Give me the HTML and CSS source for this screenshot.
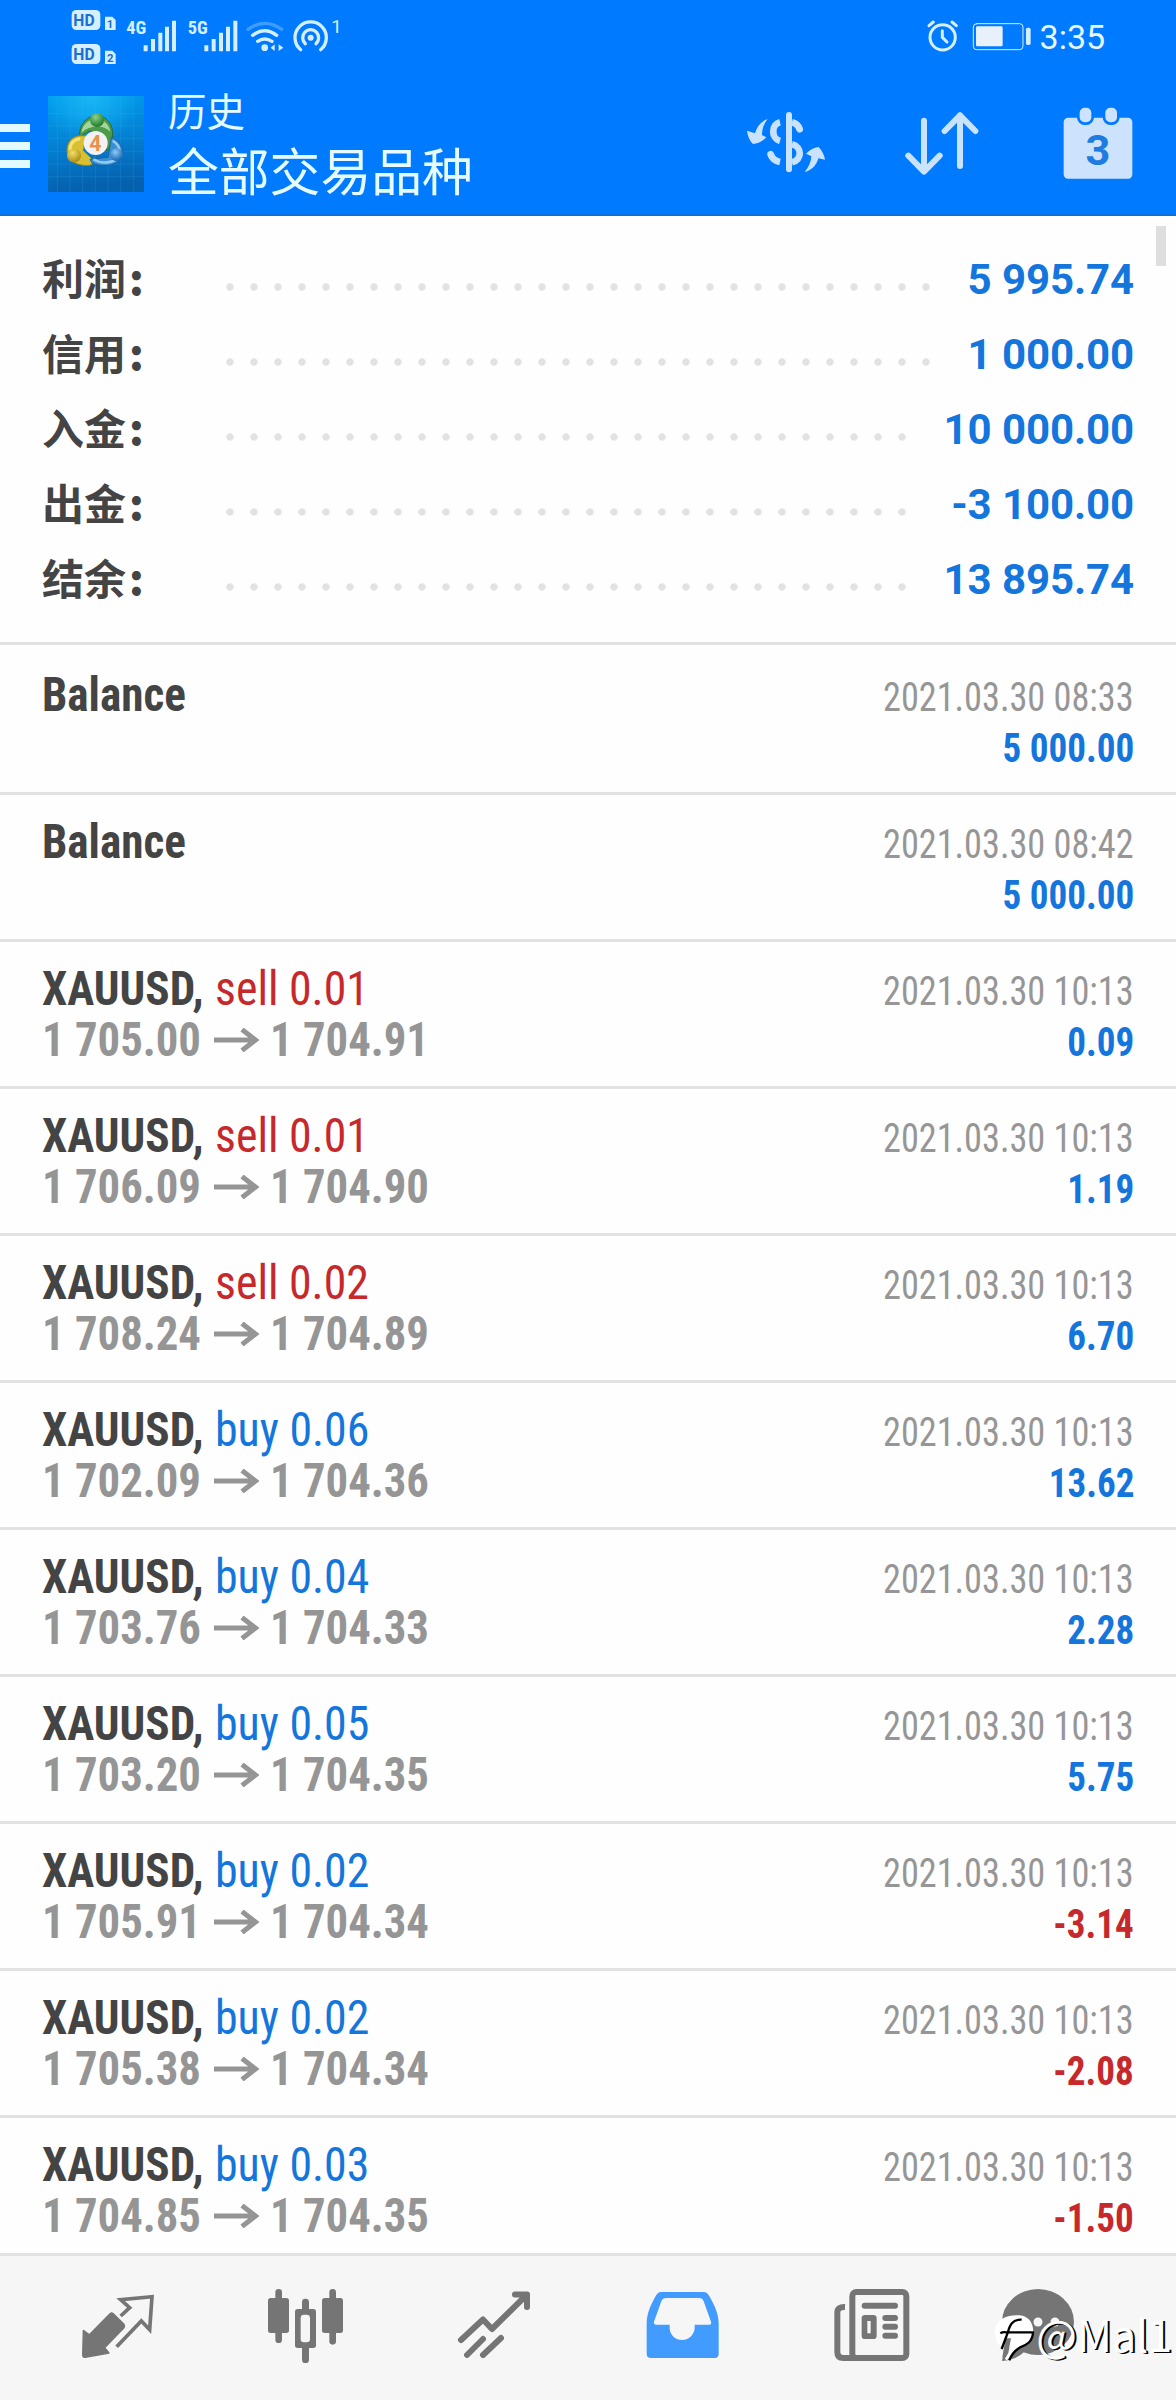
FILE: index.html
```html
<!DOCTYPE html>
<html lang="zh-CN">
<head>
<meta charset="utf-8">
<title>历史</title>
<link rel="stylesheet" href="styles.css">
</head>
<body>
<svg class="defs" width="0" height="0" aria-hidden="true">
  <symbol id="arrow" viewBox="0 0 45 24"><path d="M0 12H41M28 1.500L41.500 12L28 22.500" fill="none" stroke="#959595" stroke-width="5"/></symbol>
</svg>

<header class="header">
  <div class="status">
    <svg class="status-left" viewBox="180 0 870 216" aria-hidden="true">
      <g fill="#d5efff">
        <rect x="215" y="30" width="86" height="60" rx="14"/>
        <rect x="215" y="132" width="86" height="60" rx="14"/>
        <path d="M315 50H337L347 60V90H315ZM315 152H337L347 162V192H315Z"/>
        <path d="M431 136h12v18h-12zM453 117h12v37h-12zM475 98h12v56h-12zM495 80h12v74h-12zM516 62h12v92h-12z"/>
        <path d="M613 136h12v18h-12zM635 117h12v37h-12zM657 98h12v56h-12zM678 80h12v74h-12zM700 62h12v92h-12z"/>
        <circle cx="794" cy="143" r="10"/>
        <path d="M812 143L824 133V153ZM850 143L836 133V153Z"/>
        <circle cx="932" cy="113" r="9"/>
      </g>
      <g fill="none" stroke="#d5efff" stroke-width="10" stroke-linecap="round">
        <path d="M773 124Q794 110 816 124M758 106Q794 78 830 106"/>
        <path d="M744 88Q794 52 845 88" opacity=".3"/>
        <path d="M902 149A47 47 0 1 1 962 149M916 131A24 24 0 1 1 948 131"/>
      </g>
      <g class="st-text">
        <text class="hd" x="220" y="78">HD</text>
        <text class="hd" x="220" y="180">HD</text>
        <text class="sim" x="330" y="84" text-anchor="middle">1</text>
        <text class="sim" x="331" y="186" text-anchor="middle">2</text>
        <text class="net" x="379" y="103">4G</text>
        <text class="net" x="563" y="103">5G</text>
        <text class="one" x="994" y="98">1</text>
      </g>
    </svg>
    <svg class="status-right" viewBox="670 0 340 216" aria-hidden="true">
      <g fill="none" stroke="#d5efff" stroke-linecap="round">
        <circle cx="729" cy="112" r="38" stroke-width="9"/>
        <path d="M728 92V112L742 126" stroke-width="9"/>
        <path d="M688 77L701 66M770 77L757 66" stroke-width="9"/>
        <rect x="821" y="71" width="149" height="78" rx="10" stroke-width="3"/>
      </g>
      <rect x="829" y="79" width="80" height="60" rx="4" fill="#e8f1fb"/>
      <rect x="979" y="83" width="14" height="52" rx="5" fill="#d5efff"/>
    </svg>
    <span class="clock">3:35</span>
  </div>
  <div class="toolbar">
    <div class="burger"><i></i><i></i><i></i></div>
    <svg class="logo" viewBox="24 18 288 288" aria-hidden="true">
      <defs>
        <linearGradient id="bg" x1="0" y1="0" x2="0.15" y2="1"><stop offset="0" stop-color="#009fee"/><stop offset=".5" stop-color="#0482d4"/><stop offset="1" stop-color="#0560ae"/></linearGradient>
        <radialGradient id="glow" cx=".45" cy="0" r=".5"><stop offset="0" stop-color="#19b6f5"/><stop offset="1" stop-color="#19b6f5" stop-opacity="0"/></radialGradient>
        <radialGradient id="gg" cx=".4" cy=".3" r=".7"><stop offset="0" stop-color="#8ed18a"/><stop offset="1" stop-color="#1d7a2c"/></radialGradient>
        <radialGradient id="gy" cx=".4" cy=".3" r=".7"><stop offset="0" stop-color="#f3e067"/><stop offset="1" stop-color="#a98a13"/></radialGradient>
        <radialGradient id="gb" cx=".4" cy=".3" r=".7"><stop offset="0" stop-color="#8ccbf5"/><stop offset="1" stop-color="#1767b4"/></radialGradient>
      </defs>
      <rect x="24" y="18" width="288" height="288" fill="url(#bg)"/>
      <rect x="24" y="18" width="288" height="288" fill="url(#glow)"/>
      <path d="M52 18V306M90 18V306M128 18V306M166 18V306M204 18V306M242 18V306M280 18V306M24 70H312M24 108H312M24 146H312M24 184H312M24 222H312M24 260H312" stroke="#4fc0f5" stroke-width="1.500" opacity=".3"/>
      <path d="M119 140C116 103 140 78 170 78C201 78 222 104 217 142C214 162 209 175 200 182L190 140L150 122Z" fill="#4c9a4a" stroke="#2c6b34" stroke-width="3"/>
      <path d="M124 128C128 101 148 88 168 88C190 88 207 101 211 125C190 104 150 104 124 128Z" fill="#a5d59b"/>
      <path d="M138 138C105 132 80 150 81 182C82 210 110 230 150 226L166 216L130 182Z" fill="#d9c033" stroke="#8b8425" stroke-width="3"/>
      <path d="M214 142C239 151 252 174 247 197C240 220 200 238 156 219L150 208L204 202Z" fill="#3a8fd2" stroke="#1c609f" stroke-width="3"/>
      <path d="M160 208C183 222 211 220 232 206M218 152Q238 164 239 184" fill="none" stroke="#96cbf0" stroke-width="7"/>
      <path d="M90 180Q90 151 121 146" fill="none" stroke="#f4e474" stroke-width="8"/>
      <circle cx="171" cy="90" r="21" fill="url(#gg)"/>
      <circle cx="102" cy="197" r="21" fill="url(#gy)"/>
      <circle cx="230" cy="194" r="19" fill="url(#gb)"/>
      <circle cx="167" cy="159" r="36" fill="#f4f1f3"/>
      <text class="logo-num" x="166" y="182" text-anchor="middle">4</text>
    </svg>
    <div class="titles">
      <div class="t1">历史</div>
      <div class="t2">全部交易品种</div>
    </div>
    <svg class="act wide" viewBox="120 300 276 264" aria-hidden="true">
      <g fill="none" stroke="#c9e3ff" stroke-width="20">
        <path d="M267 345V508" stroke-width="18" stroke-linecap="round"/>
        <path d="M240 367C213 373 213 415 240 423"/>
        <path d="M212 463Q218 481 240 486"/>
        <path d="M212 463L213 465M299 388L298 386" stroke-linecap="round"/>
        <path d="M276 367Q294 371 299 388"/>
        <path d="M276 433C307 440 307 480 276 487"/>
      </g>
      <g fill="#c9e3ff">
        <path d="M203 357C185 363 171 378 165 400L141 392C143 408 149 423 159 432C173 431 188 424 199 412L186 405C186 388 191 371 203 357Z"/>
        <path d="M314 516C326 502 333 486 334 469L318 461C328 450 341 443 356 441C366 452 373 465 375 479L355 475C350 495 336 511 314 516Z"/>
      </g>
    </svg>
    <svg class="act" viewBox="606 300 240 264" aria-hidden="true">
      <path d="M672 362V514M625 467L672 515L719 467M780 498V346M734 393L780 346L826 393" fill="none" stroke="#c9e3ff" stroke-width="18" stroke-linecap="round" stroke-linejoin="round"/>
    </svg>
    <svg class="act wide" viewBox="1056 300 276 264" aria-hidden="true">
      <rect x="1091" y="353" width="206" height="183" rx="13" fill="#cde3fd"/>
      <g fill="#cde3fd" stroke="#007aff" stroke-width="8"><rect x="1135" y="319" width="43" height="52" rx="19"/><rect x="1212" y="319" width="43" height="52" rx="19"/></g>
      <text class="cal" x="1194" y="495" text-anchor="middle">3</text>
    </svg>
  </div>
</header>

<main class="main">
  <section class="summary">
    <div class="sum"><span class="label">利润<b>:</b></span><i class="dots"></i><span class="val">5 995.74</span></div>
    <div class="sum"><span class="label">信用<b>:</b></span><i class="dots"></i><span class="val">1 000.00</span></div>
    <div class="sum"><span class="label">入金<b>:</b></span><i class="dots"></i><span class="val">10 000.00</span></div>
    <div class="sum"><span class="label">出金<b>:</b></span><i class="dots"></i><span class="val">-3 100.00</span></div>
    <div class="sum"><span class="label">结余<b>:</b></span><i class="dots"></i><span class="val">13 895.74</span></div>
  </section>

  <article class="deal first">
    <div class="line"><b class="name">Balance</b><time>2021.03.30 08:33</time></div>
    <div class="line"><b class="price">&nbsp;</b><b class="amount">5 000.00</b></div>
  </article>
  <article class="deal">
    <div class="line"><b class="name">Balance</b><time>2021.03.30 08:42</time></div>
    <div class="line"><b class="price">&nbsp;</b><b class="amount">5 000.00</b></div>
  </article>
  <article class="deal">
    <div class="line"><div class="title"><b class="name">XAUUSD,</b><span class="side sell">sell 0.01</span></div><time>2021.03.30 10:13</time></div>
    <div class="line"><div class="price"><b>1 705.00</b><svg class="arrow"><use href="#arrow"/></svg><b>1 704.91</b></div><b class="amount">0.09</b></div>
  </article>
  <article class="deal">
    <div class="line"><div class="title"><b class="name">XAUUSD,</b><span class="side sell">sell 0.01</span></div><time>2021.03.30 10:13</time></div>
    <div class="line"><div class="price"><b>1 706.09</b><svg class="arrow"><use href="#arrow"/></svg><b>1 704.90</b></div><b class="amount">1.19</b></div>
  </article>
  <article class="deal">
    <div class="line"><div class="title"><b class="name">XAUUSD,</b><span class="side sell">sell 0.02</span></div><time>2021.03.30 10:13</time></div>
    <div class="line"><div class="price"><b>1 708.24</b><svg class="arrow"><use href="#arrow"/></svg><b>1 704.89</b></div><b class="amount">6.70</b></div>
  </article>
  <article class="deal">
    <div class="line"><div class="title"><b class="name">XAUUSD,</b><span class="side">buy 0.06</span></div><time>2021.03.30 10:13</time></div>
    <div class="line"><div class="price"><b>1 702.09</b><svg class="arrow"><use href="#arrow"/></svg><b>1 704.36</b></div><b class="amount">13.62</b></div>
  </article>
  <article class="deal">
    <div class="line"><div class="title"><b class="name">XAUUSD,</b><span class="side">buy 0.04</span></div><time>2021.03.30 10:13</time></div>
    <div class="line"><div class="price"><b>1 703.76</b><svg class="arrow"><use href="#arrow"/></svg><b>1 704.33</b></div><b class="amount">2.28</b></div>
  </article>
  <article class="deal">
    <div class="line"><div class="title"><b class="name">XAUUSD,</b><span class="side">buy 0.05</span></div><time>2021.03.30 10:13</time></div>
    <div class="line"><div class="price"><b>1 703.20</b><svg class="arrow"><use href="#arrow"/></svg><b>1 704.35</b></div><b class="amount">5.75</b></div>
  </article>
  <article class="deal">
    <div class="line"><div class="title"><b class="name">XAUUSD,</b><span class="side">buy 0.02</span></div><time>2021.03.30 10:13</time></div>
    <div class="line"><div class="price"><b>1 705.91</b><svg class="arrow"><use href="#arrow"/></svg><b>1 704.34</b></div><b class="amount loss">-3.14</b></div>
  </article>
  <article class="deal">
    <div class="line"><div class="title"><b class="name">XAUUSD,</b><span class="side">buy 0.02</span></div><time>2021.03.30 10:13</time></div>
    <div class="line"><div class="price"><b>1 705.38</b><svg class="arrow"><use href="#arrow"/></svg><b>1 704.34</b></div><b class="amount loss">-2.08</b></div>
  </article>
  <article class="deal">
    <div class="line"><div class="title"><b class="name">XAUUSD,</b><span class="side">buy 0.03</span></div><time>2021.03.30 10:13</time></div>
    <div class="line"><div class="price"><b>1 704.85</b><svg class="arrow"><use href="#arrow"/></svg><b>1 704.35</b></div><b class="amount loss">-1.50</b></div>
  </article>
  <div class="scrollbar"></div>
</main>

<nav class="nav">
  <svg viewBox="54 30 240 270" aria-hidden="true">
    <path d="M70 181L88 194L150 131Q155 127 160 131L192 163Q196 168 192 173L134 233L147 249L76 262Q68 262 68 254Z" fill="#757575" stroke="#757575" stroke-width="4" stroke-linejoin="round"/>
    <path d="M182 138L209 113L182 89L276 80L269 179L244 153L170 230" fill="none" stroke="#757575" stroke-width="11"/>
  </svg>
  <svg viewBox="618 30 240 270" aria-hidden="true">
    <g fill="#757575"><rect x="624" y="84" width="63" height="105" rx="8"/><rect x="646" y="57" width="20" height="162" rx="10"/><rect x="786" y="84" width="63" height="105" rx="8"/><rect x="808" y="57" width="20" height="167" rx="10"/><rect x="705" y="117" width="63" height="117" rx="8"/><rect x="726" y="86" width="21" height="193" rx="10"/></g>
    <rect x="722" y="134" width="28" height="83" rx="10" fill="#f6f6f6"/>
  </svg>
  <svg viewBox="454 2280 80 90" aria-hidden="true">
    <path d="M461 2340L483 2319.500L492 2329L526 2295.500M515 2294.500H527V2307M467 2355L483 2339M483 2355L501 2338" fill="none" stroke="#757575" stroke-width="6" stroke-linecap="round" stroke-linejoin="round"/>
  </svg>
  <svg viewBox="36 30 240 270" aria-hidden="true">
    <path fill="#429bff" fill-rule="evenodd" d="M92 66H222Q231 66 236 75C254 106 266 132 266 160V251Q266 264 253 264H63Q50 264 50 251V160C50 132 61 106 79 75Q84 66 92 66ZM108 84Q98 84 94 94L72 155Q70 164 79 164H119V176C121 196 137 210 156 210C175 210 191 196 194 176V164H237Q246 164 243 155L221 94Q217 84 208 84Z"/>
  </svg>
  <svg viewBox="600 30 240 270" aria-hidden="true">
    <rect x="667" y="66" width="162" height="198" rx="12" fill="none" stroke="#757575" stroke-width="18"/>
    <path d="M645 111Q622 110 622 128V246Q622 264 640 264H680" fill="none" stroke="#757575" stroke-width="18"/>
    <path d="M704 107H795M766 144H795M766 170H795M766 197H795" stroke="#757575" stroke-width="18" stroke-linecap="round"/>
    <path fill="#757575" fill-rule="evenodd" d="M705 135H730Q740 135 740 145V197Q740 207 730 207H705Q695 207 695 197V145Q695 135 705 135ZM712 153V190H722V153Z"/>
  </svg>
  <svg class="chat" viewBox="998 2280 80 90" aria-hidden="true">
    <ellipse cx="1038" cy="2322" rx="36" ry="33" fill="#757575"/>
    <path d="M1006 2338L1002 2361Q1016 2360 1024 2352Z" fill="#757575"/>
    <g fill="#f6f6f6"><circle cx="1021" cy="2322" r="4.500"/><circle cx="1038" cy="2322" r="4.500"/><circle cx="1055" cy="2322" r="4.500"/></g>
  </svg>
  <div class="mark">
    <svg viewBox="70 130 130 150" aria-hidden="true">
      <path d="M150 137C175 138 192 160 191 188C188 218 165 232 140 242L112 272L96 262L104 240C85 228 75 208 76 184C78 150 110 134 150 137Z" fill="#fff"/>
      <path d="M108 206L124 206L116 250L104 270L98 262Z" fill="#757575"/>
      <path d="M156 150C128 148 120 168 114 190L96 238M92 191Q100 186 110 188H190C190 216 170 226 150 234Q128 248 119 272" fill="none" stroke="#000" stroke-width="7"/>
    </svg>
    <span>@Mal1</span>
  </div>
</nav>
</body>
</html>
```
FILE: styles.css
```css
* { box-sizing: border-box; }

body {
  margin: 0;
  width: 1176px;
  height: 2400px;
  display: flex;
  flex-direction: column;
  overflow: hidden;
  position: relative;
  background: #fefefe;
  font-family: "Roboto Condensed", Roboto, "Noto Sans CJK SC", sans-serif;
}

svg { display: block; flex: none; }
.defs { position: absolute; }

/* header */
.header {
  flex: none;
  height: 216px;
  background: #007aff;
  border-bottom: 2px solid #0a6fdc;
  color: #e6f7ff;
}

.status {
  display: flex;
  height: 72px;
  padding-left: 60px;
}
.status-left { width: 290px; height: 72px; }
.status-right { width: 113.300px; height: 72px; margin-left: 573.300px; }
.clock {
  margin-left: 3px;
  font: 400 34px/74px Roboto, sans-serif;
}
.st-text { fill: #d5efff; }
.hd { font: 700 47px Roboto, sans-serif; fill: #1a6fd0; }
.sim { font: 700 34px Roboto, sans-serif; fill: #1a6fd0; }
.net { font: 700 55px "Roboto Condensed", sans-serif; }
.one { font: 400 56px Roboto, sans-serif; }

.toolbar {
  display: flex;
  align-items: center;
  height: 144px;
  padding-right: 32px;
}
.burger {
  display: flex;
  flex-direction: column;
  gap: 10px;
  width: 30px;
  margin-top: 4px;
}
.burger i { height: 8px; background: #e3fbff; }
.logo { width: 96px; height: 96px; margin-left: 18px; }
.logo-num { font: 700 64px Roboto, sans-serif; fill: #e8924a; }
.titles {
  flex: 1;
  margin: -8px 0 0 24px;
  font-family: "Noto Sans CJK SC", sans-serif;
  color: #e6fbff;
  white-space: nowrap;
}
.t1 { font-size: 38.500px; line-height: 56px; }
.t2 { font-size: 50.800px; line-height: 60px; margin-top: 2px; }
.act { width: 80px; height: 88px; margin-left: 70px; }
.wide { width: 92px; }
.cal { font: 700 130px Roboto, sans-serif; fill: #1e7be2; }

/* account totals */
.main {
  flex: 1;
  min-height: 0;
  overflow: hidden;
  position: relative;
}
.summary {
  height: 429px;
  padding: 26px 42px 0;
  border-bottom: 3px solid #e2e2e2;
}
.sum { display: flex; height: 75px; line-height: 75px; }
.label {
  width: 176px;
  font: 700 42px/69px "Noto Sans CJK SC", sans-serif;
  color: #444;
}
.label b { margin-left: 3px; }
.dots {
  flex: 1;
  margin-right: 30px;
  background: radial-gradient(circle at 12px 45px, #e2e2e2 3.200px, transparent 4.200px) 0 0 / 24px 75px repeat-x;
}
.val { font: 700 42px/75px Roboto, sans-serif; letter-spacing: -0.100px; color: #1476dc; }

/* deals */
.deal {
  height: 147px;
  padding: 21px 42px 0;
  border-bottom: 3px solid #e2e2e2;
  overflow: hidden;
}
.first { height: 150px; padding-top: 24px; }
.line {
  display: flex;
  justify-content: space-between;
  align-items: baseline;
  height: 51px;
  font-size: 48px;
  line-height: 51px;
  white-space: nowrap;
}
.title, .price { display: flex; align-items: baseline; }

/* the digits and names are set a little narrower than the face's own width */
.name { color: #444; transform: scaleX(.94); transform-origin: left; }
.side { margin-left: 1px; color: #1476dc; transform: scaleX(.955); transform-origin: left; }
.side.sell { color: #c6282c; }
time { font-size: 40px; color: #969696; transform: scaleX(.906); transform-origin: right; }
.amount { font-size: 40px; color: #1476dc; transform: scaleX(.927); transform-origin: right; }
.amount.loss { color: #c6282c; }
.price { color: #959595; }
.price b { transform: scaleX(.932); transform-origin: left; }
.arrow {
  width: 45px;
  height: 24px;
  margin: 0 11px 0 1px;
  align-self: center;
}
.scrollbar {
  position: absolute;
  top: 10px;
  right: 10px;
  width: 10px;
  height: 40px;
  background: #dedede;
}

/* bottom tabs */
.nav {
  flex: none;
  position: relative;
  display: flex;
  gap: 108px;
  height: 147px;
  padding: 24px 0 0 78px;
  background: #f6f6f6;
  border-top: 3px solid #e2e2e2;
}
.nav > svg { width: 80px; height: 90px; }
.nav > .chat { margin-left: -20px; }
.mark {
  position: absolute;
  left: 993px;
  top: 54px;
  display: flex;
}
.mark svg { width: 43.300px; height: 50px; margin-top: 3px; }
.mark span {
  margin-top: -7px;
  font: 400 43px/60px "Noto Sans CJK SC", sans-serif;
  color: #fff;
  text-shadow: 2px 1px 0 #000;
}
```
